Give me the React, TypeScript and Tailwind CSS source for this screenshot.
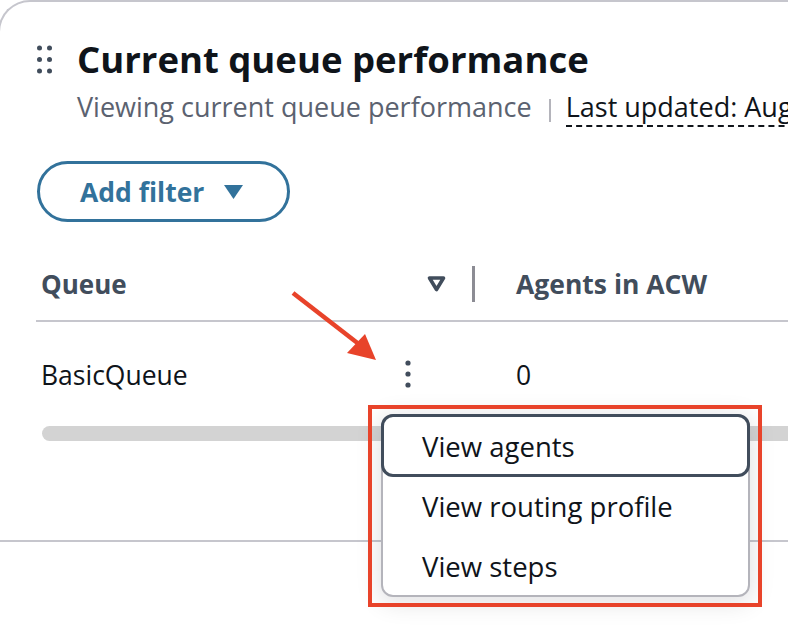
import React from 'react';

function DragHandle() {
  return (
    <svg width="15" height="40" viewBox="0 0 15 40" className="shrink-0 fill-[#414d5c]">
      <circle cx="2.5" cy="11" r="2.5" />
      <circle cx="12.5" cy="11" r="2.5" />
      <circle cx="2.5" cy="22.5" r="2.5" />
      <circle cx="12.5" cy="22.5" r="2.5" />
      <circle cx="2.5" cy="34" r="2.5" />
      <circle cx="12.5" cy="34" r="2.5" />
    </svg>
  );
}

const menuItems = ['View agents', 'View routing profile', 'View steps'];

export default function App() {
  return (
    <div className="relative h-[642px] w-[788px] overflow-hidden bg-white font-['Open_Sans',sans-serif] text-[#0f141a]">
      <div className="ml-[-2px] h-[700px] w-[1000px] rounded-tl-[32px] border-l-2 border-t-2 border-[#c6c6cd]">
        <div className="pl-[37px] pt-[35px]">
          {/* header */}
          <div className="flex items-start">
            <DragHandle />
            <h2 className="ml-[25px] text-[36.5px] font-bold leading-[44px]">
              Current queue performance
            </h2>
          </div>
          <div className="mt-[8px] flex items-start whitespace-nowrap pl-[40px] text-[27px] leading-[36px]">
            <span className="text-[#5b6270]">Viewing current queue performance</span>
            <span className="ml-[17px] mt-[10px] h-[23px] w-[2px] shrink-0 bg-[#b4b4bb]" />
            <span className="ml-[15px] border-b-2 border-dashed border-[#0f141a]">
              Last updated: Aug 14, 2024
            </span>
          </div>

          <button className="mt-[34px] flex h-[61px] w-[253px] items-center gap-[20px] rounded-full border-[3px] border-[#32729b] pl-[40px] text-[26.5px] font-bold leading-[36px] text-[#32729b]">
            Add filter
            <svg width="19" height="14" viewBox="0 0 19 14" className="fill-[#32729b]">
              <path d="M0 0h19L9.5 14z" />
            </svg>
          </button>

          {/* table */}
          <div className="-ml-px mt-[28px]">
            <div className="flex h-[72px] items-start border-b-2 border-[#c6c6cd] pt-[16px] text-[26px] font-bold leading-[36px] text-[#414d5c]">
              <div className="flex w-[439px] items-start pl-[5px]">
                <span className="flex-1">Queue</span>
                <svg width="19" height="16" viewBox="0 0 19 16" className="mt-[10px]">
                  <path d="M2.5 2h14L9.5 13.5z" fill="none" stroke="#414d5c" strokeWidth="3.6" strokeLinejoin="round" />
                </svg>
                <span className="ml-[26px] h-[36px] w-[3px] bg-[#8c8c94]" />
              </div>
              <div className="whitespace-nowrap pl-[41px] text-[26.5px]">Agents in ACW</div>
            </div>
            <div className="flex items-start pt-[35px] text-[26.5px] leading-[36px]">
              <div className="flex w-[439px] items-start pl-[5px]">
                <span className="flex-1">BasicQueue</span>
                <svg width="6" height="28" viewBox="0 0 6 28" className="mr-[64px] mt-[3px] fill-[#414d5c]">
                  <circle cx="3" cy="3" r="2.6" />
                  <circle cx="3" cy="14" r="2.6" />
                  <circle cx="3" cy="25" r="2.6" />
                </svg>
              </div>
              <div className="pl-[41px]">0</div>
            </div>
            <div className="ml-[6px] mt-[33px] h-[15px] rounded-full bg-[#d3d3d3]" />
          </div>
        </div>
        <div className="mt-[99px] border-t-2 border-[#c6c6cd]" />
      </div>

      {/* dropdown menu */}
      <div className="absolute left-[381px] top-[414px] w-[369px] rounded-[12px] border-2 border-[#b4b4bb] bg-white text-[27.5px] leading-[36px] shadow-[0_4px_24px_2px_rgba(0,7,22,0.12)]">
        {menuItems.map((item, i) =>
          i === 0 ? (
            <div
              key={item}
              className="-mx-[2px] -mt-[2px] h-[63px] rounded-[12px] border-[3px] border-[#414d5c] pl-[38px] pt-[12px]">
              {item}
            </div>
          ) : (
            <div key={item} className={`pl-[39px] pt-[12px] ${i === 2 ? 'h-[58px]' : 'h-[60px]'}`}>
              {item}
            </div>
          )
        )}
      </div>

      {/* annotation */}
      <div className="absolute left-[368px] top-[405px] h-[202px] w-[394px] border-4 border-[#e8432a]" />
      <svg className="pointer-events-none absolute inset-0" width="788" height="642">
        <line x1="293" y1="293" x2="360" y2="345" stroke="#e8432a" strokeWidth="4.5" />
        <polygon points="347,353 365,334 376,360" fill="#e8432a" />
      </svg>
    </div>
  );
}
